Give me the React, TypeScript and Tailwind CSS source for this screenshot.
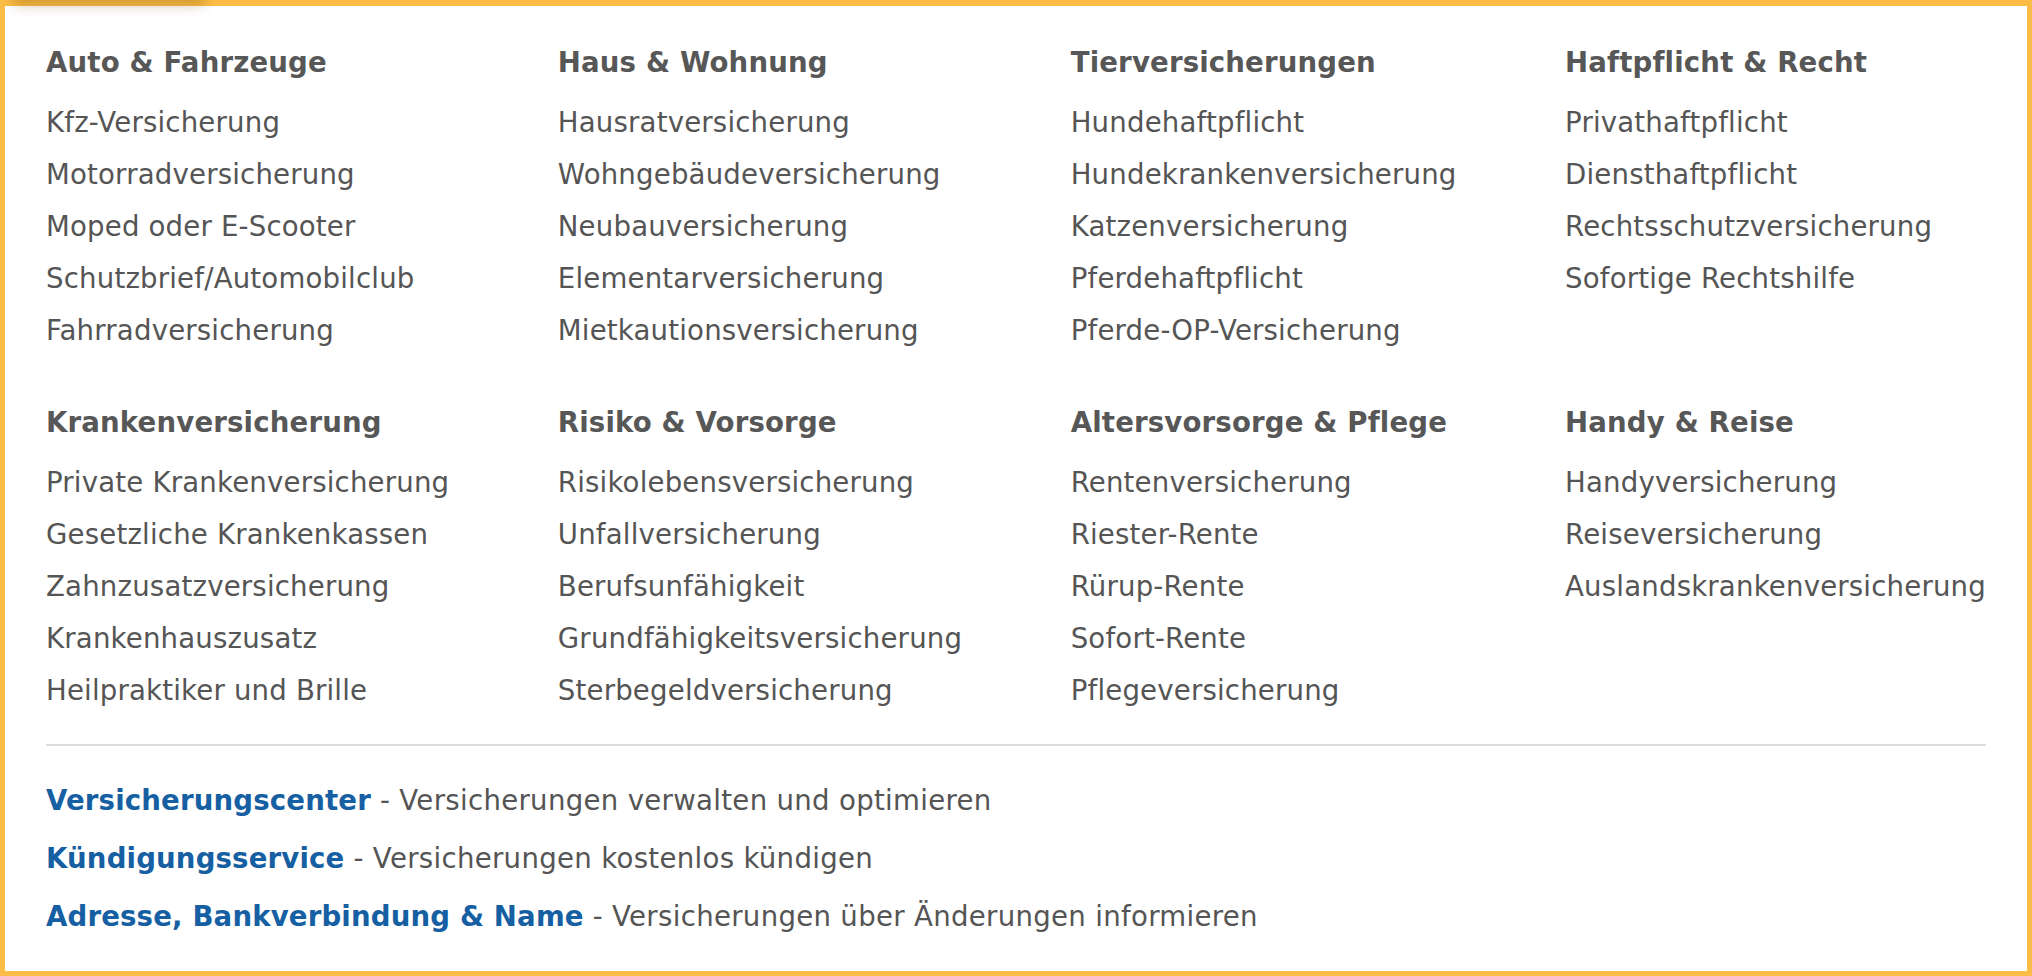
import React from "react";

type Group = { title: string; items: string[] };

const groups: Group[] = [
  {
    title: "Auto & Fahrzeuge",
    items: [
      "Kfz-Versicherung",
      "Motorradversicherung",
      "Moped oder E-Scooter",
      "Schutzbrief/Automobilclub",
      "Fahrradversicherung",
    ],
  },
  {
    title: "Haus & Wohnung",
    items: [
      "Hausratversicherung",
      "Wohngebäudeversicherung",
      "Neubauversicherung",
      "Elementarversicherung",
      "Mietkautionsversicherung",
    ],
  },
  {
    title: "Tierversicherungen",
    items: [
      "Hundehaftpflicht",
      "Hundekrankenversicherung",
      "Katzenversicherung",
      "Pferdehaftpflicht",
      "Pferde-OP-Versicherung",
    ],
  },
  {
    title: "Haftpflicht & Recht",
    items: [
      "Privathaftpflicht",
      "Diensthaftpflicht",
      "Rechtsschutzversicherung",
      "Sofortige Rechtshilfe",
    ],
  },
  {
    title: "Krankenversicherung",
    items: [
      "Private Krankenversicherung",
      "Gesetzliche Krankenkassen",
      "Zahnzusatzversicherung",
      "Krankenhauszusatz",
      "Heilpraktiker und Brille",
    ],
  },
  {
    title: "Risiko & Vorsorge",
    items: [
      "Risikolebensversicherung",
      "Unfallversicherung",
      "Berufsunfähigkeit",
      "Grundfähigkeitsversicherung",
      "Sterbegeldversicherung",
    ],
  },
  {
    title: "Altersvorsorge & Pflege",
    items: [
      "Rentenversicherung",
      "Riester-Rente",
      "Rürup-Rente",
      "Sofort-Rente",
      "Pflegeversicherung",
    ],
  },
  {
    title: "Handy & Reise",
    items: [
      "Handyversicherung",
      "Reiseversicherung",
      "Auslandskrankenversicherung",
    ],
  },
];

const links = [
  { label: "Versicherungscenter", text: "Versicherungen verwalten und optimieren" },
  { label: "Kündigungsservice", text: "Versicherungen kostenlos kündigen" },
  { label: "Adresse, Bankverbindung & Name", text: "Versicherungen über Änderungen informieren" },
];

export default function App() {
  return (
    <div className="w-[2032px] h-[976px] overflow-hidden bg-white">
      <div className="relative h-[976px] box-border border-solid border-[#fbbd46] border-x-[5px] border-b-[5px] border-t-[6px] bg-white px-[41px] pt-[31px] font-['DejaVu_Sans',Verdana,sans-serif] text-[27.6px] text-[#555555]">
        <div className="pointer-events-none absolute left-[6px] top-[-26px] h-[20px] w-[196px] rounded-full shadow-[0_6px_12px_rgba(120,70,0,0.28)]" />
        <div className="grid grid-cols-[repeat(4,max-content)] justify-between gap-y-[40.6px]">
          {groups.map((g) => (
            <div key={g.title}>
              <h3 className="mb-[8.6px] font-bold leading-[51.8px] tracking-[0.15px] text-[#575757]">{g.title}</h3>
              <ul>
                {g.items.map((it) => (
                  <li key={it} className="leading-[51.8px] tracking-[0.18px] whitespace-nowrap">
                    {it}
                  </li>
                ))}
              </ul>
            </div>
          ))}
        </div>
        <div className="mt-[28px] h-[2px] bg-[#dddddd]" />
        <div className="mt-[26px]">
          {links.map((l) => (
            <div key={l.label} className="leading-[58px] whitespace-nowrap">
              <span className="font-bold tracking-[0.15px] text-[#165fa2]">{l.label}</span>
              <span className="tracking-[0.3px]"> - {l.text}</span>
            </div>
          ))}
        </div>
      </div>
    </div>
  );
}
